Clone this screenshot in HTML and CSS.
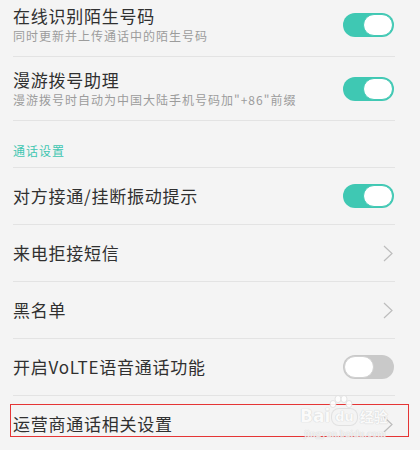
FILE: index.html
```html
<!DOCTYPE html>
<html lang="zh-CN">
<head>
    <meta charset="UTF-8">
    <title>通话设置</title>
    <link rel="stylesheet" href="styles.css">
</head>
<body>
    <div class="settings">
        <div class="row row-double">
            <div class="row-text">
                <div class="title">在线识别陌生号码</div>
                <div class="subtitle">同时更新并上传通话中的陌生号码</div>
            </div>
            <span class="switch on"><span class="knob"></span></span>
        </div>
        <div class="row row-double">
            <div class="row-text">
                <div class="title">漫游拨号助理</div>
                <div class="subtitle">漫游拨号时自动为中国大陆手机号码加"+86"前缀</div>
            </div>
            <span class="switch on"><span class="knob"></span></span>
        </div>
        <div class="section-header">通话设置</div>
        <div class="row">
            <div class="title">对方接通/挂断振动提示</div>
            <span class="switch on"><span class="knob"></span></span>
        </div>
        <div class="row">
            <div class="title">来电拒接短信</div>
            <svg class="chevron" width="10" height="17" viewBox="0 0 10 17"><polyline points="1,1 9,8.5 1,16" fill="none" stroke="#bdbdbd" stroke-width="1.2"/></svg>
        </div>
        <div class="row">
            <div class="title">黑名单</div>
            <svg class="chevron" width="10" height="17" viewBox="0 0 10 17"><polyline points="1,1 9,8.5 1,16" fill="none" stroke="#bdbdbd" stroke-width="1.2"/></svg>
        </div>
        <div class="row">
            <div class="title">开启VoLTE语音通话功能</div>
            <span class="switch"><span class="knob"></span></span>
        </div>
        <div class="row row-last">
            <div class="title">运营商通话相关设置</div>
            <svg class="chevron" width="10" height="17" viewBox="0 0 10 17"><polyline points="1,1 9,8.5 1,16" fill="none" stroke="#bdbdbd" stroke-width="1.2"/></svg>
            <div class="highlight"></div>
        </div>
    </div>

    <div class="watermark">
        <div class="wm-logo">
            <span class="wm-bai">Bai</span>
            <span class="wm-du">
                <svg class="wm-paw" width="26" height="14" viewBox="0 0 26 14">
                    <ellipse cx="5" cy="9" rx="3" ry="3.5" fill="#fff" stroke="#dcdcdc" stroke-width="0.8"/>
                    <ellipse cx="10" cy="4" rx="3" ry="3.5" fill="#fff" stroke="#dcdcdc" stroke-width="0.8"/>
                    <ellipse cx="16" cy="4" rx="3" ry="3.5" fill="#fff" stroke="#dcdcdc" stroke-width="0.8"/>
                    <ellipse cx="21" cy="9" rx="3" ry="3.5" fill="#fff" stroke="#dcdcdc" stroke-width="0.8"/>
                </svg>
                du
            </span>
            <span class="wm-jy">经验</span>
        </div>
        <div class="wm-url">jingyan.baidu.com</div>
    </div>
</body>
</html>
```

FILE: styles.css
```css
body {
    margin: 0;
    background: #f4f4f4;
    font-family: "Noto Sans CJK SC", "Noto Sans", sans-serif;
    width: 420px;
    height: 450px;
    overflow: hidden;
    position: relative;
}
.settings {
    margin: -7px 25px 0 13px;
}
.row {
    height: 56px;
    display: flex;
    align-items: center;
    justify-content: space-between;
    border-bottom: 1px solid #e3e3e3;
}
.row-double {
    height: 63px;
}
.row-last {
    position: relative;
    border-bottom: none;
}
.row-text {
    display: flex;
    flex-direction: column;
}
.title {
    font-size: 17px;
    line-height: 22px;
    letter-spacing: 0.75px;
    color: #303030;
}
.subtitle {
    font-size: 12px;
    line-height: 18px;
    letter-spacing: 1px;
    color: #9c9c9c;
}
.section-header {
    height: 47px;
    display: flex;
    align-items: flex-end;
    padding-bottom: 8px;
    box-sizing: border-box;
    font-size: 12px;
    line-height: 16px;
    letter-spacing: 1px;
    color: #3fc6b1;
    border-bottom: 1px solid #e3e3e3;
}
.switch {
    width: 51px;
    height: 24px;
    border-radius: 12px;
    background: #c9c9c9;
    display: flex;
    align-items: center;
    justify-content: flex-start;
    padding: 1px;
    box-sizing: border-box;
    margin-right: 1px;
}
.switch.on {
    background: #3fc8b3;
    justify-content: flex-end;
}
.knob {
    width: 20px;
    height: 20px;
    border-radius: 50%;
    background: #fff;
    border: 1px solid #d0d0d0;
    width: 28px;
    border-radius: 11px;
}
.switch.on .knob {
    border-color: #45c9b5;
}
.chevron {
    margin-right: 2px;
}
.highlight {
    position: absolute;
    left: -3px;
    right: -14px;
    top: 8px;
    height: 33px;
    border: 1px solid #e53535;
    box-sizing: border-box;
}
.watermark {
    position: absolute;
    left: 300px;
    top: 394px;
    width: 100px;
    opacity: 0.9;
}
.wm-logo {
    display: flex;
    align-items: flex-end;
    height: 31px;
    font-family: "DejaVu Sans", sans-serif;
    font-weight: bold;
    color: #fbfbfb;
    text-shadow: 0 0 1px #cfcfcf, 0 0 1px #cfcfcf;
}
.wm-bai {
    font-size: 17px;
    line-height: 18px;
}
.wm-du {
    position: relative;
    font-size: 13px;
    line-height: 16px;
    margin-left: 2px;
    padding: 0 3px;
    border-radius: 7px;
    background: #f4f4f4;
    box-shadow: 0 0 0 1px #e0e0e0;
}
.wm-paw {
    position: absolute;
    left: -4px;
    top: -14px;
}
.wm-jy {
    font-family: "Noto Sans CJK SC", sans-serif;
    font-size: 14px;
    line-height: 18px;
    margin-left: 3px;
}
.wm-url {
    font-family: "Liberation Serif", serif;
    font-size: 11px;
    line-height: 12px;
    margin: 2px 0 0 4px;
    color: #f7f7f7;
    text-shadow: 0 0 1px #d2d2d2, 0 0 1px #d2d2d2;
}
```
